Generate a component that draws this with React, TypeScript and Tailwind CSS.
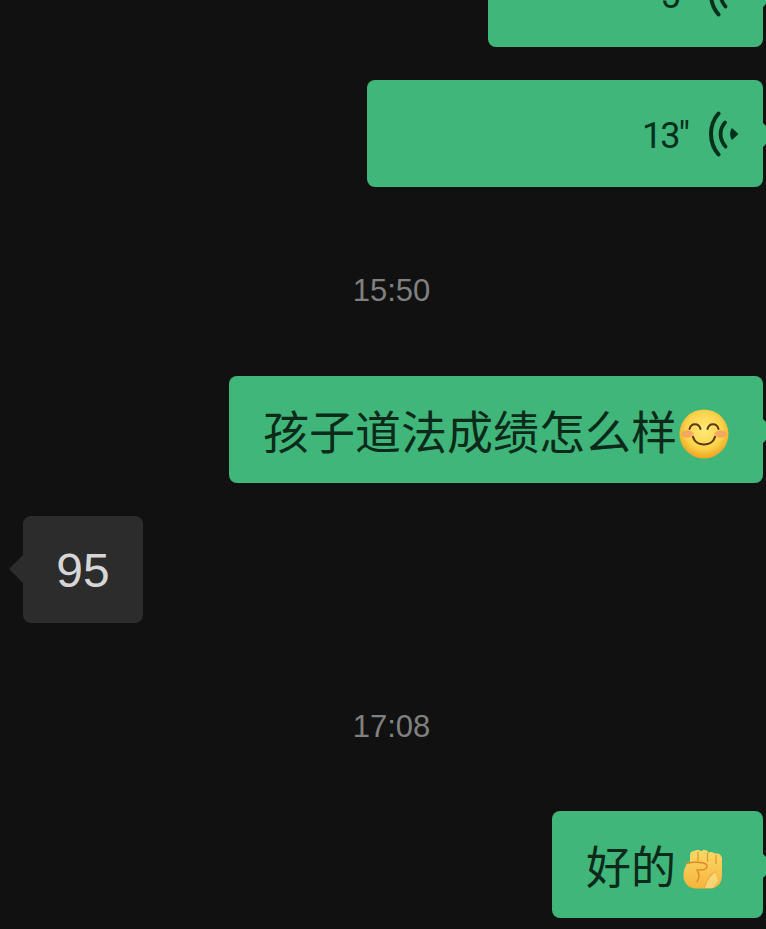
function VoiceIcon() {
  return (
    <svg width="32" height="46" viewBox="0 0 32 46" fill="none" className="shrink-0">
      <path d="M10.5 2.500C0.500 14 0.500 32 10.500 43.500" stroke="#05301b" strokeWidth="4" strokeLinecap="round" />
      <path d="M17 11.500C11 18.500 11 28 17.500 35.500" stroke="#05301b" strokeWidth="3.800" strokeLinecap="round" />
      <path d="M24 17L30.500 23L24 29C21.500 26 21.500 20 24 17Z" fill="#05301b" />
    </svg>
  );
}

function SmileEmoji() {
  return (
    <svg width="50" height="50" viewBox="0 0 50 50" className="shrink-0">
      <defs>
        <radialGradient id="face" cx="50%" cy="42%" r="58%">
          <stop offset="0%" stopColor="#ffe97a" />
          <stop offset="65%" stopColor="#fcd34a" />
          <stop offset="100%" stopColor="#f0a322" />
        </radialGradient>
      </defs>
      <circle cx="25" cy="25" r="24.500" fill="url(#face)" />
      <ellipse cx="8.500" cy="25" rx="6" ry="3.500" fill="#f29a6a" opacity="0.750" />
      <ellipse cx="41.500" cy="25" rx="6" ry="3.500" fill="#f29a6a" opacity="0.750" />
      <path d="M10.500 20C12 13.500 20 13.500 21.500 20" stroke="#5b3a12" strokeWidth="2" strokeLinecap="round" fill="none" />
      <path d="M28.500 20C30 13.500 38 13.500 39.500 20" stroke="#5b3a12" strokeWidth="2" strokeLinecap="round" fill="none" />
      <path d="M14 28C17 38 33 38 36 28" stroke="#5b3a12" strokeWidth="2.200" strokeLinecap="round" fill="none" />
    </svg>
  );
}

function FistEmoji() {
  return (
    <svg width="42" height="42" viewBox="0 0 42 42" className="shrink-0">
      <defs>
        <linearGradient id="fist" x1="0" y1="0" x2="0" y2="1">
          <stop offset="0%" stopColor="#fdd868" />
          <stop offset="100%" stopColor="#f5b53c" />
        </linearGradient>
      </defs>
      <path
        d="M4 17C4 14 6 13 8 13L8 6C8 3 10.500 1.500 12.500 2C14 .5 18 .5 19.500 2.500C21 .5 25 .5 26.500 3.500C29 2.500 31 3 33 4.500C37 4 40 6 40 10L40 26C40 34 36 38 30 39.500L14 39.500C7 39.500 1.500 34 1.500 27C1.500 23 2 19 4 17Z"
        fill="url(#fist)"
      />
      <path d="M16 3V13M25.500 3.500V13M34 6V15" stroke="#e0982a" strokeWidth="1.200" fill="none" />
      <path d="M5 14.500C10 12.500 20 13 24 15C26 17 25 20 22 20.500L15 21C17 24 18 28 15 33" stroke="#d98c22" strokeWidth="1.400" strokeLinecap="round" fill="none" />
      <path d="M23 39C24 32 28 27 33 23" stroke="#e0982a" strokeWidth="1.200" strokeLinecap="round" fill="none" />
      <path d="M23 39C24 32 28 27 33 23L36 32L31 39Z" fill="#fbe08a" opacity="0.700" />
    </svg>
  );
}

function RightTail() {
  return <span className="absolute left-full top-[43px] h-0 w-0 border-y-[12px] border-l-[12px] border-y-transparent border-l-[#40b67a]" />;
}

function VoiceBubble({ width, secs }: { width: string; secs: string }) {
  return (
    <div className={`relative flex h-[107px] items-center justify-end gap-[20px] self-end rounded-lg bg-[#40b67a] pr-[23px] ${width}`}>
      <span className="pt-[4px] text-[36px] tracking-[-2px] text-[#05301b]">{secs}</span>
      <VoiceIcon />
      <RightTail />
    </div>
  );
}

function Time({ children }: { children: string }) {
  return <div className="ml-[20px] text-center font-['Liberation_Sans',sans-serif] text-[31px] leading-[40px] text-[#808080]">{children}</div>;
}

export default function App() {
  return (
    <div className="flex h-[929px] w-[766px] flex-col overflow-hidden bg-[#111112] pr-[3px] font-['Roboto','Noto_Sans_CJK_SC',sans-serif]">
      <div className="-mt-[60px] flex flex-col">
        <VoiceBubble width="w-[275px]" secs={'5"'} />
        <div className="mt-[33px] flex flex-col">
          <VoiceBubble width="w-[396px]" secs={'13"'} />
        </div>
      </div>

      <div className="mt-[84px]">
        <Time>15:50</Time>
      </div>

      <div className="relative mt-[65px] flex h-[107px] w-[534px] items-center self-end rounded-lg bg-[#40b67a] pl-[34px] pt-[8px] text-[46px] text-[#0b2a19]">
        <span className="whitespace-nowrap">孩子道法成绩怎么样</span>
        <span className="ml-[2px]">
          <SmileEmoji />
        </span>
        <RightTail />
      </div>

      <div className="relative ml-[23px] mt-[33px] flex h-[107px] w-[120px] items-center justify-center rounded-lg bg-[#2c2c2c] pt-[2px] font-['Liberation_Sans',sans-serif] text-[48px] text-[#d6d6d6]">
        95
        <span className="absolute right-full top-[39px] h-0 w-0 border-y-[14px] border-r-[14px] border-y-transparent border-r-[#2c2c2c]" />
      </div>

      <div className="mt-[84px]">
        <Time>17:08</Time>
      </div>

      <div className="relative mt-[64px] flex h-[107px] w-[211px] items-center self-end rounded-lg bg-[#40b67a] pl-[34px] pt-[8px] text-[45px] text-[#0b2a19]">
        <span className="whitespace-nowrap">好的</span>
        <span className="ml-[6px] mt-[3px]">
          <FistEmoji />
        </span>
        <RightTail />
      </div>
    </div>
  );
}
